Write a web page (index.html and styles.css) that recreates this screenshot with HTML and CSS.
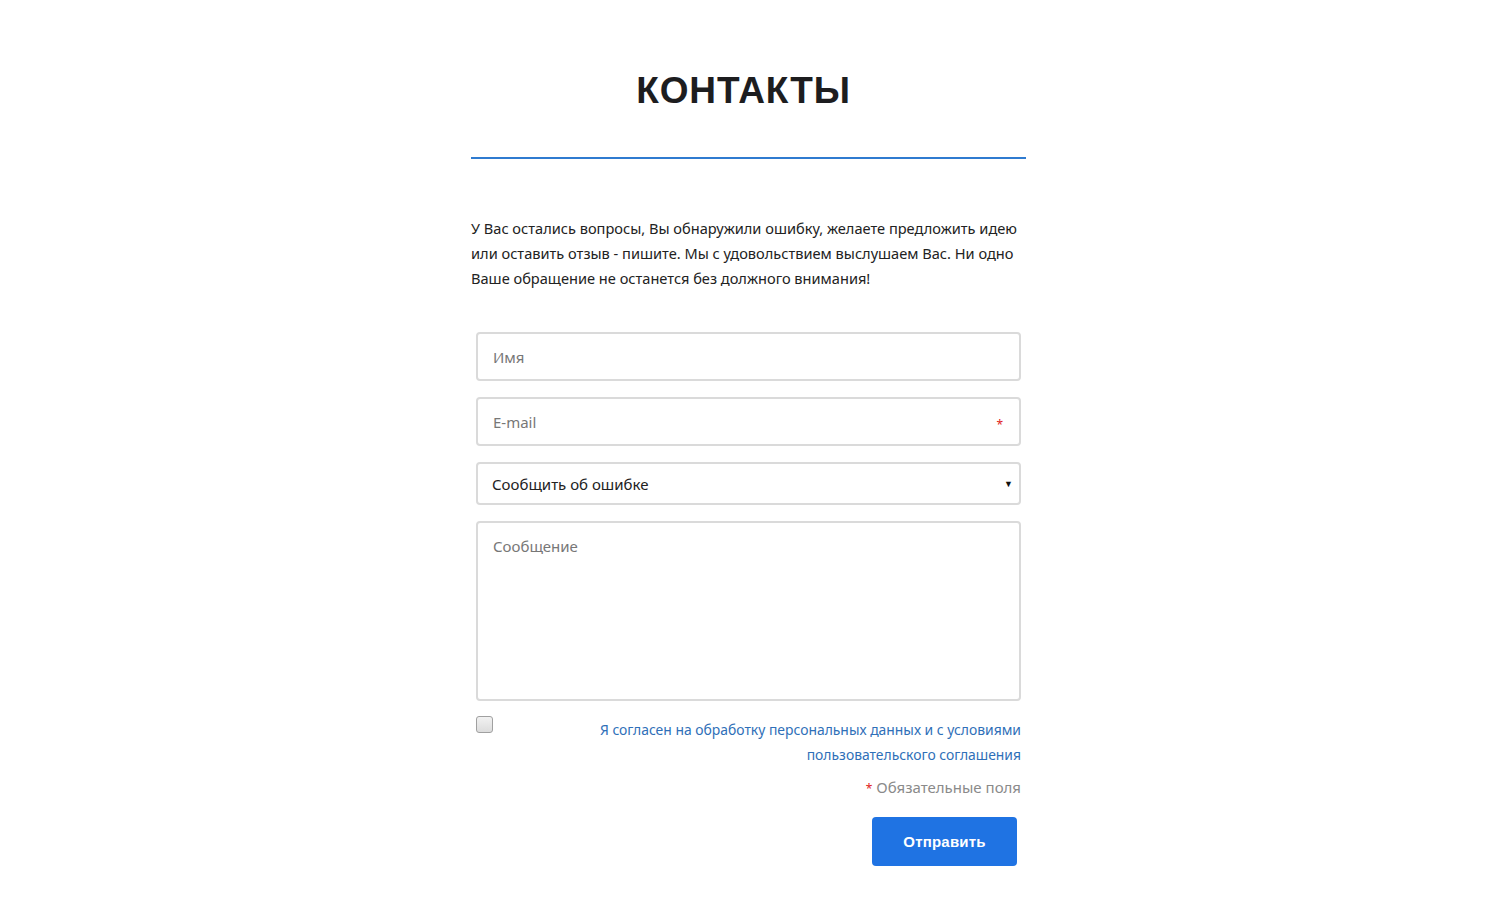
FILE: index.html
```html
<!DOCTYPE html>
<html lang="ru">
<head>
<meta charset="utf-8">
<title>Контакты</title>
<link rel="stylesheet" href="styles.css">
</head>
<body>
<main class="page">
  <h1 class="title">КОНТАКТЫ</h1>
  <div class="rule"></div>
  <p class="intro">У Вас остались вопросы, Вы обнаружили ошибку, желаете предложить идею или оставить отзыв - пишите. Мы с удовольствием выслушаем Вас. Ни одно Ваше обращение не останется без должного внимания!</p>
  <form class="form">
    <div class="field"><input class="input" type="text" placeholder="Имя"></div>
    <div class="field"><input class="input" type="text" placeholder="E-mail"><span class="req">*</span></div>
    <div class="field select">
      <span class="select-text">Сообщить об ошибке</span>
      <span class="caret">▼</span>
    </div>
    <div class="field"><textarea class="textarea" placeholder="Сообщение"></textarea></div>
    <div class="agree">
      <span class="checkbox"></span>
      <a class="agree-text" href="#">Я согласен на обработку персональных данных и с условиями пользовательского соглашения</a>
    </div>
    <div class="required"><span class="star">*</span> Обязательные поля</div>
    <div class="actions"><button class="btn" type="button">Отправить</button></div>
  </form>
</main>
</body>
</html>
```
FILE: styles.css
```css
html, body { margin: 0; padding: 0; background: #fff; }
body { font-family: "Noto Sans", "Open Sans", sans-serif; color: #222; padding-right: 2px; }
.page { width: 555px; margin: 0 auto; padding-top: 68px; }
.title { margin: 0; text-align: center; font-family: "Liberation Sans", Arial, sans-serif; font-weight: 700; font-size: 37px; line-height: 46px; color: #1d1d1f; letter-spacing: 0.9px; padding-right: 10px; }
.rule { height: 2px; background: #2f7bd0; margin-top: 43px; }
.intro { margin: 57px 0 0; font-size: 14.6px; line-height: 25px; color: #222; }
.form { padding: 0 5px; margin-top: 41px; }
.field { position: relative; margin-bottom: 16px; }
.input, .textarea { display: block; box-sizing: border-box; width: 100%; border: 2px solid #dadada; border-radius: 4px; font-family: inherit; font-size: 15px; padding: 0 15px; outline: none; color: #222; background: #fff; }
.input { height: 49px; }
.input::placeholder, .textarea::placeholder { color: #777; }
.req { position: absolute; right: 18px; top: 20px; color: #e01b1b; font-size: 12px; line-height: 16px; }
.select { box-sizing: border-box; height: 43px; border: 2px solid #dadada; border-radius: 4px; display: flex; align-items: center; justify-content: space-between; padding: 0 6px 0 14px; }
.select-text { font-size: 15px; color: #222; }
.caret { font-size: 9px; color: #111; }
.textarea { height: 180px; padding-top: 13px; resize: none; }
.agree { display: flex; justify-content: space-between; align-items: flex-start; margin-top: -1px; }
.checkbox { flex: none; box-sizing: border-box; width: 17px; height: 17px; border: 1px solid #a0a0a0; border-radius: 3px; background: linear-gradient(#f2f2f2, #dcdcdc); }
.agree-text { text-align: right; font-size: 13.9px; line-height: 25px; color: #2f6fb8; text-decoration: none; max-width: 440px; margin-top: 1px; }
.required { text-align: right; margin-top: 10px; font-size: 15px; color: #8a8a8a; line-height: 20px; }
.star { color: #e01b1b; font-size: 12px; line-height: 10px; }
.actions { display: flex; justify-content: flex-end; margin-top: 20px; padding-right: 4px; }
.btn { width: 145px; height: 49px; border: none; border-radius: 4px; background: #1f73e3; color: #fff; font-family: "Liberation Sans", Arial, sans-serif; font-weight: 700; font-size: 15px; letter-spacing: 0.2px; }
```
